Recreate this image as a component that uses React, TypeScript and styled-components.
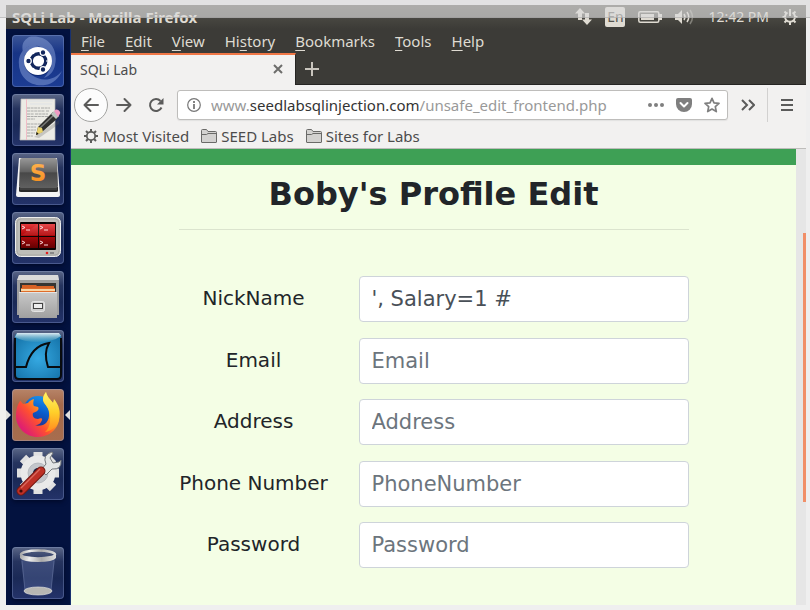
import React from "react";
import styled, { createGlobalStyle } from "styled-components";

const uiFont = `"Noto Sans", "Open Sans", sans-serif`;
const pageFont = `"DejaVu Sans", Verdana, sans-serif`;

const GlobalStyle = createGlobalStyle`
  *, *::before, *::after { box-sizing: border-box; }
  body { margin: 0; background: #efefef; font-family: ${uiFont}; font-size: 15px; }
  button, input { font: inherit; color: inherit; }
  svg { display: block; flex: none; }
`;

const Screen = styled.div`
  position: relative;
  display: flex;
  min-height: 100vh;
  padding: 5px 4px 5px 6px;
`;

const HostBar = styled.div`
  position: absolute;
  inset: 0 0 auto 0;
  height: 18px;
  background: rgba(219, 219, 219, 0.66);
  border-bottom: 1px solid rgba(150, 150, 150, 0.45);
  pointer-events: none;
`;

const Desktop = styled.div`
  flex: 1;
  min-width: 0;
  display: flex;
  flex-direction: column;
`;

const Panel = styled.header`
  display: flex;
  align-items: center;
  height: 24px;
  padding: 0 8px 0 6px;
  color: #dfdbd2;
  background: linear-gradient(#56554c, #3c3b37);
`;

const PanelTitle = styled.div`
  flex: 1;
  font-weight: 700;
  font-size: 15px;
  line-height: 24px;
  white-space: nowrap;
`;

const Indicators = styled.div`
  display: flex;
  align-items: center;
  gap: 13px;
`;

const Keyboard = styled.div`
  width: 20px;
  height: 20px;
  border-radius: 2px;
  background: #dfdbd2;
  color: #55544e;
  font-size: 14px;
  line-height: 20px;
  text-align: center;
`;

const Clock = styled.time`
  font-size: 14px;
  line-height: 24px;
  white-space: nowrap;
`;

const Workspace = styled.div`
  flex: 1;
  display: flex;
`;

const Launcher = styled.nav`
  display: flex;
  flex-direction: column;
  gap: 7px;
  width: 65px;
  padding: 6px;
  background: #03123f;
  border-right: 1px solid #18316f;
`;

const Tile = styled.button<{ $tone?: "home" | "active"; $last?: boolean }>`
  position: relative;
  width: 52px;
  height: 52px;
  padding: 0;
  margin-top: ${(p) => (p.$last ? "auto" : "0")};
  border: 0;
  border-radius: 4px;
  background: ${(p) =>
    p.$tone === "home"
      ? "linear-gradient(#3c5697, #173486 35%, #1c3c93)"
      : p.$tone === "active"
      ? "linear-gradient(#b78468, #a4694a 30%, #a76d4e)"
      : "linear-gradient(#5b6787, #26345f 28%, #1a2956 60%, #24336a)"};
  box-shadow: inset 0 0 0 1px rgba(160, 180, 225, 0.3), 0 2px 4px #010a2a;
`;

const Pip = styled.span<{ $side: "left" | "right" }>`
  position: absolute;
  top: 21px;
  ${(p) => (p.$side === "left" ? "left: -6px" : "right: -6px")};
  border: 5px solid transparent;
  ${(p) =>
    p.$side === "left"
      ? "border-left-color: #dfdfdf; border-right-width: 0;"
      : "border-right-color: #dfdfdf; border-left-width: 0;"}
`;

const Browser = styled.section`
  flex: 1;
  min-width: 0;
  display: flex;
  flex-direction: column;
  background: #f2f1f0;
`;

const MenuBar = styled.div`
  display: flex;
  align-items: center;
  gap: 20px;
  height: 24px;
  padding: 0 10px;
  background: #3c3b37;
`;

const MenuItem = styled.button`
  padding: 0;
  border: 0;
  background: none;
  color: #dfdbd2;
  line-height: 24px;
  u { text-underline-offset: 3px; text-decoration-thickness: 1px; text-decoration-skip-ink: none; }
`;

const TabStrip = styled.div`
  display: flex;
  height: 32px;
  background: #3c3b37;
  box-shadow: inset 0 -1px #252422;
`;

const Tab = styled.div`
  display: flex;
  align-items: center;
  justify-content: space-between;
  width: 225px;
  padding: 0 12px 2px 9px;
  border-top: 2px solid #f07746;
  border-right: 1px solid #252422;
  background: #f2f1f0;
  color: #4c4c4c;
  font-size: 14px;
`;

const IconButton = styled.button<{ $w?: number }>`
  display: flex;
  align-items: center;
  justify-content: center;
  flex: none;
  width: ${(p) => p.$w ?? 16}px;
  padding: 0;
  border: 0;
  background: none;
`;

const Toolbar = styled.div`
  display: flex;
  align-items: center;
  height: 40px;
  padding-left: 3px;
`;

const BackButton = styled(IconButton)`
  width: 34px;
  height: 34px;
  border: 1px solid #a3a3a1;
  border-radius: 50%;
  background: #fcfcfc;
`;

const NavGroup = styled.div`
  display: flex;
  gap: 16px;
  margin: 0 13px 0 8px;
`;

const AddressBox = styled.div`
  flex: 1;
  min-width: 0;
  display: flex;
  align-items: center;
  gap: 12px;
  height: 30px;
  padding: 0 7px 0 9px;
  border: 1px solid #bebdbb;
  border-radius: 3px;
  background: #fff;
  box-shadow: 0 1px 1px #e2e1e0;
`;

const Address = styled.div`
  flex: 1;
  min-width: 0;
  margin-left: -2px;
  overflow: hidden;
  color: #999;
  font-size: 15px;
  line-height: 24px;
  white-space: nowrap;
  b { color: #333; font-weight: 400; }
`;

const MoreButton = styled(IconButton)`
  width: 40px;
  height: 34px;
  border-right: 1px solid #d2d1d0;
`;

const Bookmarks = styled.div`
  display: flex;
  align-items: center;
  gap: 12px;
  height: 24px;
  padding: 0 12px 2px;
  border-bottom: 1px solid #bebdbb;
`;

const Bookmark = styled.a`
  display: flex;
  align-items: center;
  gap: 4px;
  color: #4c4c4c;
  text-decoration: none;
  line-height: 20px;
  white-space: nowrap;
`;

const Viewport = styled.div`
  flex: 1;
  display: flex;
`;

const Page = styled.main`
  flex: 1;
  min-width: 0;
  padding-bottom: 37px;
  border-top: 16px solid #3ea055;
  background: #f4fee5;
  color: #212529;
  font-family: ${pageFont};
`;

const Scrollbar = styled.div`
  display: flex;
  flex-direction: column;
  align-items: flex-end;
  width: 10px;
  background: #e6e6e6;
`;

const ScrollGap = styled.div<{ $part: number }>`
  flex: ${(p) => p.$part} 0 0;
`;

const Thumb = styled(ScrollGap)`
  width: 3px;
  background: #f18f68;
`;

const Content = styled.div`
  max-width: 510px;
  margin: 0 auto;
`;

const Title = styled.h1`
  margin: 0;
  padding: 9px 0 14px;
  border-bottom: 1px solid #dbe4ce;
  font-size: 32px;
  line-height: 41px;
  text-align: center;
`;

const Form = styled.form`
  display: flex;
  flex-direction: column;
  justify-content: space-between;
  min-height: 292px;
  margin-top: 46px;
`;

const Field = styled.div`
  display: grid;
  grid-template-columns: 150px 1fr;
  column-gap: 30px;
  align-items: center;
`;

const Label = styled.label`
  font-size: 20px;
  line-height: 24px;
  padding-bottom: 2px;
  text-align: center;
  white-space: nowrap;
`;

const TextBox = styled.input`
  width: 100%;
  min-width: 0;
  height: 46px;
  padding: 0 12px;
  border: 1px solid #ced4da;
  border-radius: 4px;
  outline: 0;
  background: #fff;
  color: #495057;
  font-size: 21px;
  &::placeholder { color: #6c757d; opacity: 1; }
`;

const HomeIcon = () => (
  <svg width="52" height="52" viewBox="0 0 52 52" fill="none">
    <g fill="#9db4e8" opacity=".42">
      <path d="M17 2C34-1 47 12 43 30 42 36 38 41 32 43 43 31 39 15 26 11 20 9 14 12 11 17 9 9 12 5 17 2Z" />
      <path d="M8 23C4 38 15 52 33 50 41 49 47 43 50 36 42 46 29 47 20 40 14 35 11 28 13 20Z" />
      <path d="M8 34C4 23 10 12 22 9L27 12C15 14 8 23 8 34Z" />
    </g>
    <circle cx="26" cy="27" r="14" fill="#061b58" opacity=".5" />
    <circle cx="26" cy="26" r="14" fill="#fff" />
    <circle cx="26.500" cy="26" r="7.300" stroke="#12265c" strokeWidth="3.400" />
    <g stroke="#fff" strokeWidth="1.200">
      <circle cx="16.500" cy="26" r="2.800" fill="#12265c" />
      <circle cx="31" cy="17.500" r="2.800" fill="#12265c" />
      <circle cx="31" cy="34.500" r="2.800" fill="#12265c" />
      <path d="M34 26h2M22 19l-2-3M22 33l-2 3" />
    </g>
  </svg>
);

const EditorIcon = () => (
  <svg width="52" height="52" viewBox="0 0 52 52" fill="none">
    <path d="M9 5h34v41H8Z" fill="#ecebe5" stroke="#b9b9b9" strokeWidth=".7" />
    <path d="M14.500 5v41" stroke="#f0bcc6" />
    <path d="M18 10h22M16 7h25" stroke="#d7dbe6" strokeWidth=".6" />
    <path d="M15 14h13m1 0h9M15 17h18m1 0h3M15 20h7m1 0h13M15 22.500h21M15 25h8M15 30h14m1 0h5M15 33h9M15 36h9M15 39h8M15 42h6" stroke="#999" strokeWidth=".8" strokeDasharray="3 .6" />
    <path d="M22 43 47 26v4L27 44Z" fill="#555" opacity=".25" />
    <path d="m24 41 2-8L41 18l5 6-16 14Z" fill="#2e2e2d" />
    <path d="m28 34 15-14" stroke="#7b7b79" strokeWidth="1.500" />
    <path d="m24 41 2-8 4 1 1 4Z" fill="#ead36a" />
    <path d="m24 41 .7-3 2 2Z" fill="#111" />
    <path d="m39 20 3-3 5 5-3 3Z" fill="#bdc4bf" />
    <path d="m42 17 2-1.500q2-.5 3.500 1.500t0 3.500L46 23Z" fill="#f09bc4" />
  </svg>
);

const SublimeIcon = () => (
  <svg width="52" height="52" viewBox="0 0 52 52">
    <defs>
      <linearGradient id="keyTop" x1="0" y1="0" x2="0" y2="1"><stop stopColor="#989898" /><stop offset=".45" stopColor="#626262" /><stop offset=".5" stopColor="#484848" /><stop offset="1" stopColor="#606060" /></linearGradient>
      <linearGradient id="glow" x1="0" y1="0" x2="0" y2="1"><stop stopColor="#ffb654" /><stop offset="1" stopColor="#f58a17" /></linearGradient>
    </defs>
    <path d="M7 5h38l3 37q0 2-2 2H6q-2 0-2-2Z" fill="#f4f4f4" />
    <path d="M7 34h39v4q0 1-2 1H9q-2 0-2-1Z" fill="#2a2a2a" />
    <path d="M10 5h33q2 0 2 2l1 26q0 2-2 2H9q-2 0-2-2L8 7q0-2 2-2Z" fill="url(#keyTop)" />
    <path d="M8 36h37" stroke="#555" />
    <text x="26" y="28" textAnchor="middle" fontFamily="DejaVu Sans, sans-serif" fontWeight="700" fontSize="23" fill="url(#glow)">S</text>
  </svg>
);

const TerminatorIcon = () => (
  <svg width="52" height="52" viewBox="0 0 52 52" fill="none">
    <defs><linearGradient id="pane" x1="0" y1="0" x2="0" y2="1"><stop stopColor="#e53a3c" /><stop offset=".4" stopColor="#b90b0e" /><stop offset="1" stopColor="#650001" /></linearGradient></defs>
    <rect x="3.500" y="5.500" width="45" height="39" rx="5" fill="#bdbdb8" stroke="#eee" />
    <rect x="5" y="7" width="42" height="36" rx="4" stroke="#a9a9a5" />
    <rect x="8" y="10" width="36" height="28" rx="1" fill="#0c0303" />
    <path d="M9 12h17v12H9ZM27 12h16v12H27ZM9 25h17v11H9ZM27 25h16v11H27Z" fill="url(#pane)" />
    <path d="M26.500 12v24M9 24.500h34" stroke="#0c0303" />
    <path d="M26 12h17v11L10 23Z" fill="#fff" opacity=".08" />
    <path d="m10 14 3 1.500-3 1.500m4 1h4M28 14l3 1.500-3 1.500m4 1h4M10 29l3 1.500-3 1.500m4 1h4M28 29l3 1.500-3 1.500m4 1h4" stroke="#fbdada" />
    <circle cx="35" cy="41" r="1.300" fill="#e32020" />
    <path d="M38 41h4" stroke="#888" strokeWidth="2" />
  </svg>
);

const FilesIcon = () => (
  <svg width="52" height="52" viewBox="0 0 52 52">
    <defs><linearGradient id="drawer" x1="0" y1="0" x2="0" y2="1"><stop stopColor="#c8c8c8" /><stop offset="1" stopColor="#a0a0a0" /></linearGradient></defs>
    <path d="M7 4h39l1 6v34H5V10Z" fill="#9f9f9f" />
    <path d="M7 4h39l1 5H5Z" fill="#dadada" />
    <path d="M8 12h36v10H8Z" fill="#373532" />
    <path d="M10 14h14l1 1h17v7H10Z" fill="#d76225" />
    <path d="M9 17h34v5H9Z" fill="#f8d6a6" />
    <path d="M9 17.500h34M9 20.500h34" stroke="#df6d2b" />
    <path d="M7 21h38v26H7Z" fill="url(#drawer)" />
    <path d="M7 21.500h38" stroke="#e4e4e4" />
    <rect x="19.500" y="30.500" width="13" height="10" rx="2" fill="#cfcfcf" stroke="#e4e4e4" />
    <rect x="21.500" y="32.500" width="9" height="5" fill="#eee" stroke="#444" />
  </svg>
);

const SharkIcon = () => (
  <svg width="52" height="52" viewBox="0 0 52 52" fill="none">
    <defs>
      <radialGradient id="sea" cx=".5" cy=".55" r=".6"><stop stopColor="#35a9e2" /><stop offset="1" stopColor="#1878ae" /></radialGradient>
      <linearGradient id="gloss" x1="0" y1="0" x2="0" y2="1"><stop stopColor="#fff" stopOpacity=".85" /><stop offset="1" stopColor="#9cc" stopOpacity=".1" /></linearGradient>
    </defs>
    <rect x="3" y="3" width="46" height="46" rx="4" fill="url(#sea)" />
    <path d="M5 3h42l2 3q-8 6-23 6T3 7Z" fill="url(#gloss)" />
    <path d="M3 8v37q0 4 4 4h38q4 0 4-4V8" stroke="#080b0e" strokeWidth="2" />
    <path d="M3 37h11C17 25 24 15 37 13 33 20 33 28 36 37h13" stroke="#080b0e" strokeWidth="2" />
  </svg>
);

const FirefoxIcon = () => (
  <svg width="52" height="52" viewBox="0 0 52 52">
    <defs>
      <linearGradient id="fox" x1=".9" y1=".1" x2=".15" y2=".8"><stop stopColor="#ffe934" /><stop offset=".4" stopColor="#ff9a1f" /><stop offset=".65" stopColor="#ff512f" /><stop offset="1" stopColor="#e0206f" /></linearGradient>
      <linearGradient id="tail" x1=".5" y1="0" x2=".5" y2="1"><stop stopColor="#fff36a" /><stop offset=".5" stopColor="#ffd02a" /><stop offset="1" stopColor="#ff8a20" /></linearGradient>
      <linearGradient id="globe" x1=".7" y1="0" x2=".3" y2="1"><stop stopColor="#1a94ea" /><stop offset=".5" stopColor="#0a5ccc" /><stop offset="1" stopColor="#292b86" /></linearGradient>
    </defs>
    <circle cx="26" cy="22" r="15" fill="url(#globe)" />
    <path d="M8 12C9 12 10 14 11 15L16 14C17 12 19 11 22 10 21 13 21 16 22 17L26 18C28 21 24 23 21 24 20 27 22 30 26 30 28 29 31 29 30 31 29 34 27 36 23 36 30 39 38 34 37 24 37 20 35 17 32 14 30 10 31 6 34 3 35 8 38 10 41 14 48 22 49 30 45 37 41 44 34 48 26 48 13 48 4 38 4 27 4 21 5 16 8 12Z" fill="url(#fox)" />
    <path d="M34 3C35 8 38 10 41 14L42 10C47 16 49 23 47 30 46 37 40 42 33 43 39 38 39 28 37 22 36 18 32 15 31 11 31 7 33 5 34 3Z" fill="url(#tail)" />
  </svg>
);

const SettingsIcon = () => (
  <svg width="52" height="52" viewBox="0 0 52 52" fill="none">
    <g stroke="#e0e0e0" strokeWidth="9">
      <path d="M26 4v42M5 25h42M11 10l30 30M41 10 11 40" />
    </g>
    <circle cx="26" cy="25" r="13" stroke="#e9e9e9" strokeWidth="9" />
    <circle cx="26" cy="25" r="10" fill="#c3c6cb" stroke="#aeb2b9" strokeWidth=".8" />
    <circle cx="26" cy="25" r="5" fill="#132044" />
    <path d="m29 22 5-6q-4-9 6-12l1 1-3 5 3 5 6-1 2-2q1 10-9 9l-6 6Z" fill="#e4e6e6" stroke="#75797c" />
    <path d="m9 43 20-20" stroke="#711812" strokeWidth="9" strokeLinecap="round" />
    <path d="m9 43 20-20" stroke="#bd3026" strokeWidth="7" strokeLinecap="round" />
    <path d="m9 40 19-19" stroke="#d9695e" strokeWidth="1.200" />
    <circle cx="9" cy="43" r="1.600" fill="#3d0c0a" />
  </svg>
);

const TrashIcon = () => (
  <svg width="52" height="52" viewBox="0 0 52 52" fill="none">
    <defs><linearGradient id="rim"><stop stopColor="#aaa" /><stop offset=".25" stopColor="#eee" /><stop offset=".6" stopColor="#aaa" /><stop offset="1" stopColor="#ddd" /></linearGradient></defs>
    <path d="m9 11 4 34q13 5 26 0l4-34Z" fill="#7384b8" opacity=".3" />
    <path d="m10 14 3 30m29-30-3 30" stroke="#8795bd" strokeWidth=".7" opacity=".5" />
    <ellipse cx="26" cy="44" rx="14" ry="4" fill="#b7b7b3" stroke="#ddd" strokeWidth=".7" />
    <ellipse cx="26" cy="7.500" rx="17" ry="4" stroke="url(#rim)" strokeWidth="2.500" />
    <path d="M8 8q3 4 18 4t18-4v3q-3 4-18 4T8 11Z" fill="url(#rim)" />
  </svg>
);

const NetworkIcon = () => (
  <svg width="18" height="18" viewBox="0 0 18 18" fill="#dfdbd2">
    <path d="m6 0 5 5.500H8V12H4V5.500H1ZM13 17l-5-5.500h3V5h4v6.500h3Z" />
  </svg>
);

const BatteryIcon = () => (
  <svg width="24" height="14" viewBox="0 0 24 14" fill="none">
    <rect x=".8" y="1.800" width="20" height="10.400" rx="1.500" stroke="#dfdbd2" strokeWidth="1.500" />
    <path d="M3 4h13v6H3ZM21 4h3v6h-3Z" fill="#dfdbd2" />
  </svg>
);

const SpeakerIcon = () => (
  <svg width="20" height="16" viewBox="0 0 20 16" fill="none" stroke="#dfdbd2" strokeWidth="1.500">
    <path d="M0 5h3l4-4v14l-4-4H0Z" fill="#dfdbd2" stroke="none" />
    <path d="M9 5q2 3 0 6M12 3q3.500 5 0 10" />
    <path d="M15 1q5 7 0 14" opacity=".4" />
  </svg>
);

const PowerIcon = () => (
  <svg width="16" height="18" viewBox="0 0 16 18" fill="none" stroke="#dfdbd2">
    <path d="M5.500 4.500a5 5 0 1 0 5 0" strokeWidth="2" />
    <path d="M8 1v7M.5 9H3m10 0h2.500M2.500 3.500l2 2m7 0 2-2M2.500 14.500l2-2m7 0 2 2M8 14v3" strokeWidth="2" />
  </svg>
);

const GearIcon = () => (
  <svg width="16" height="16" viewBox="0 0 16 16" fill="none" stroke="#5c5c5a">
    <circle cx="8" cy="8" r="4.200" strokeWidth="1.800" />
    <path d="M8 1v3M8 12v3M1 8h3M12 8h3M3 3l2 2M11 11l2 2M13 3l-2 2M5 11l-2 2" strokeWidth="2" />
  </svg>
);

const FolderIcon = () => (
  <svg width="16" height="14" viewBox="0 0 16 14" fill="#d3d2d0" stroke="#6a6a68">
    <path d="M.5 13V1.500q0-1 1-1h4l1.500 2h7.500q1 0 1 1V13q0 .5-.5.500H1q-.5 0-.5-.5ZM.5 5.500h5l1.500-1h8.500" />
  </svg>
);

const line = { fill: "none", stroke: "#5b5b5a", strokeWidth: 2 } as const;

const menus = ["File", "Edit", "View", "History", "Bookmarks", "Tools", "Help"];
const keyIndex: Record<string, number> = { History: 2 };

const apps = [
  { name: "Search your computer", icon: <HomeIcon />, tone: "home" as const },
  { name: "Text Editor", icon: <EditorIcon /> },
  { name: "Sublime Text", icon: <SublimeIcon /> },
  { name: "Terminator", icon: <TerminatorIcon /> },
  { name: "Files", icon: <FilesIcon /> },
  { name: "Wireshark", icon: <SharkIcon /> },
  { name: "Firefox", icon: <FirefoxIcon />, tone: "active" as const },
  { name: "System Settings", icon: <SettingsIcon /> },
];

const fields = [
  { label: "NickName", placeholder: "NickName", value: "', Salary=1 #" },
  { label: "Email", placeholder: "Email" },
  { label: "Address", placeholder: "Address" },
  { label: "Phone Number", placeholder: "PhoneNumber" },
  { label: "Password", placeholder: "Password", type: "password" },
];

export default function App() {
  return (
    <Screen>
      <GlobalStyle />
      <Desktop>
        <Panel>
          <PanelTitle>SQLi Lab - Mozilla Firefox</PanelTitle>
          <Indicators>
            <NetworkIcon />
            <Keyboard>En</Keyboard>
            <BatteryIcon />
            <SpeakerIcon />
            <Clock>12:42 PM</Clock>
            <PowerIcon />
          </Indicators>
        </Panel>
        <Workspace>
          <Launcher aria-label="Launcher">
            {apps.map((a) => (
              <Tile key={a.name} aria-label={a.name} $tone={a.tone}>
                {a.icon}
                {a.tone === "active" && (
                  <>
                    <Pip $side="left" />
                    <Pip $side="right" />
                  </>
                )}
              </Tile>
            ))}
            <Tile aria-label="Trash" $last>
              <TrashIcon />
            </Tile>
          </Launcher>
          <Browser>
            <MenuBar>
              {menus.map((m) => {
                const k = keyIndex[m] ?? 0;
                return (
                  <MenuItem key={m}>
                    {m.slice(0, k)}
                    <u>{m[k]}</u>
                    {m.slice(k + 1)}
                  </MenuItem>
                );
              })}
            </MenuBar>
            <TabStrip>
              <Tab>
                SQLi Lab
                <IconButton $w={10} aria-label="Close tab">
                  <svg width="10" height="10" {...line} stroke="#6d6d6b"><path d="m1 1 8 8M9 1 1 9" /></svg>
                </IconButton>
              </Tab>
              <IconButton $w={32} aria-label="New tab">
                <svg width="14" height="14" {...line} stroke="#c9c5bd"><path d="M7 0v14M0 7h14" /></svg>
              </IconButton>
            </TabStrip>
            <Toolbar>
              <BackButton aria-label="Back">
                <svg width="16" height="16" {...line} strokeLinecap="round" strokeLinejoin="round"><path d="M15 8H1.500M7.500 2l-6 6 6 6" /></svg>
              </BackButton>
              <NavGroup>
                <IconButton aria-label="Forward">
                  <svg width="16" height="16" {...line} strokeLinecap="round" strokeLinejoin="round"><path d="M1 8h13.500M8.500 2l6 6-6 6" /></svg>
                </IconButton>
                <IconButton aria-label="Reload">
                  <svg width="16" height="16" {...line}><path d="M13.500 10.500A6 6 0 1 1 12.500 4" /><path d="M15.500 1v6.500H9Z" fill="#5b5b5a" stroke="none" /></svg>
                </IconButton>
              </NavGroup>
              <AddressBox>
                <IconButton $w={14} aria-label="Site information">
                  <svg width="14" height="14" fill="none" stroke="#777"><circle cx="7" cy="7" r="6.300" strokeWidth="1.200" /><path d="M7 6v5M7 3v2" strokeWidth="1.800" /></svg>
                </IconButton>
                <Address>www.<b>seedlabsqlinjection.com</b>/unsafe_edit_frontend.php</Address>
                <IconButton aria-label="Page actions">
                  <svg width="16" height="4" fill="#7f7f7f"><circle cx="2" cy="2" r="2" /><circle cx="8" cy="2" r="2" /><circle cx="14" cy="2" r="2" /></svg>
                </IconButton>
                <IconButton aria-label="Save to Pocket">
                  <svg width="16" height="16" fill="none"><path d="M2 1h12q2 0 2 2v4a8 8 0 0 1-16 0V3q0-2 2-2Z" fill="#7f7f7f" /><path d="m4.500 6 3.500 3.500L11.500 6" stroke="#fff" strokeWidth="2" strokeLinecap="round" strokeLinejoin="round" /></svg>
                </IconButton>
                <IconButton aria-label="Bookmark this page">
                  <svg width="16" height="16" viewBox="0 0 16 16" fill="none" stroke="#7f7f7f" strokeWidth="1.700" strokeLinejoin="round"><path d="m8 1.300 2 4.500 5 .5-3.700 3.300 1 5L8 12.100l-4.300 2.500 1-5L1 6.300l5-.5Z" /></svg>
                </IconButton>
              </AddressBox>
              <MoreButton aria-label="More tools">
                <svg width="14" height="12" {...line}><path d="m1 1 5 5-5 5M8 1l5 5-5 5" /></svg>
              </MoreButton>
              <IconButton $w={38} aria-label="Open menu">
                <svg width="12" height="12" {...line}><path d="M0 1h12M0 6h12M0 11h12" /></svg>
              </IconButton>
            </Toolbar>
            <Bookmarks>
              <Bookmark href="#most-visited"><GearIcon />Most Visited</Bookmark>
              <Bookmark href="#seed-labs"><FolderIcon />SEED Labs</Bookmark>
              <Bookmark href="#sites-for-labs"><FolderIcon />Sites for Labs</Bookmark>
            </Bookmarks>
            <Viewport>
              <Page>
                <Content>
                  <Title>Boby's Profile Edit</Title>
                  <Form onSubmit={(e: React.FormEvent) => e.preventDefault()}>
                    {fields.map((f) => (
                      <Field key={f.label}>
                        <Label htmlFor={f.placeholder}>{f.label}</Label>
                        <TextBox id={f.placeholder} type={f.type ?? "text"} placeholder={f.placeholder} defaultValue={f.value} />
                      </Field>
                    ))}
                  </Form>
                </Content>
              </Page>
              <Scrollbar>
                <ScrollGap $part={84} />
                <Thumb $part={269} />
                <ScrollGap $part={103} />
              </Scrollbar>
            </Viewport>
          </Browser>
        </Workspace>
      </Desktop>
      <HostBar />
    </Screen>
  );
}
